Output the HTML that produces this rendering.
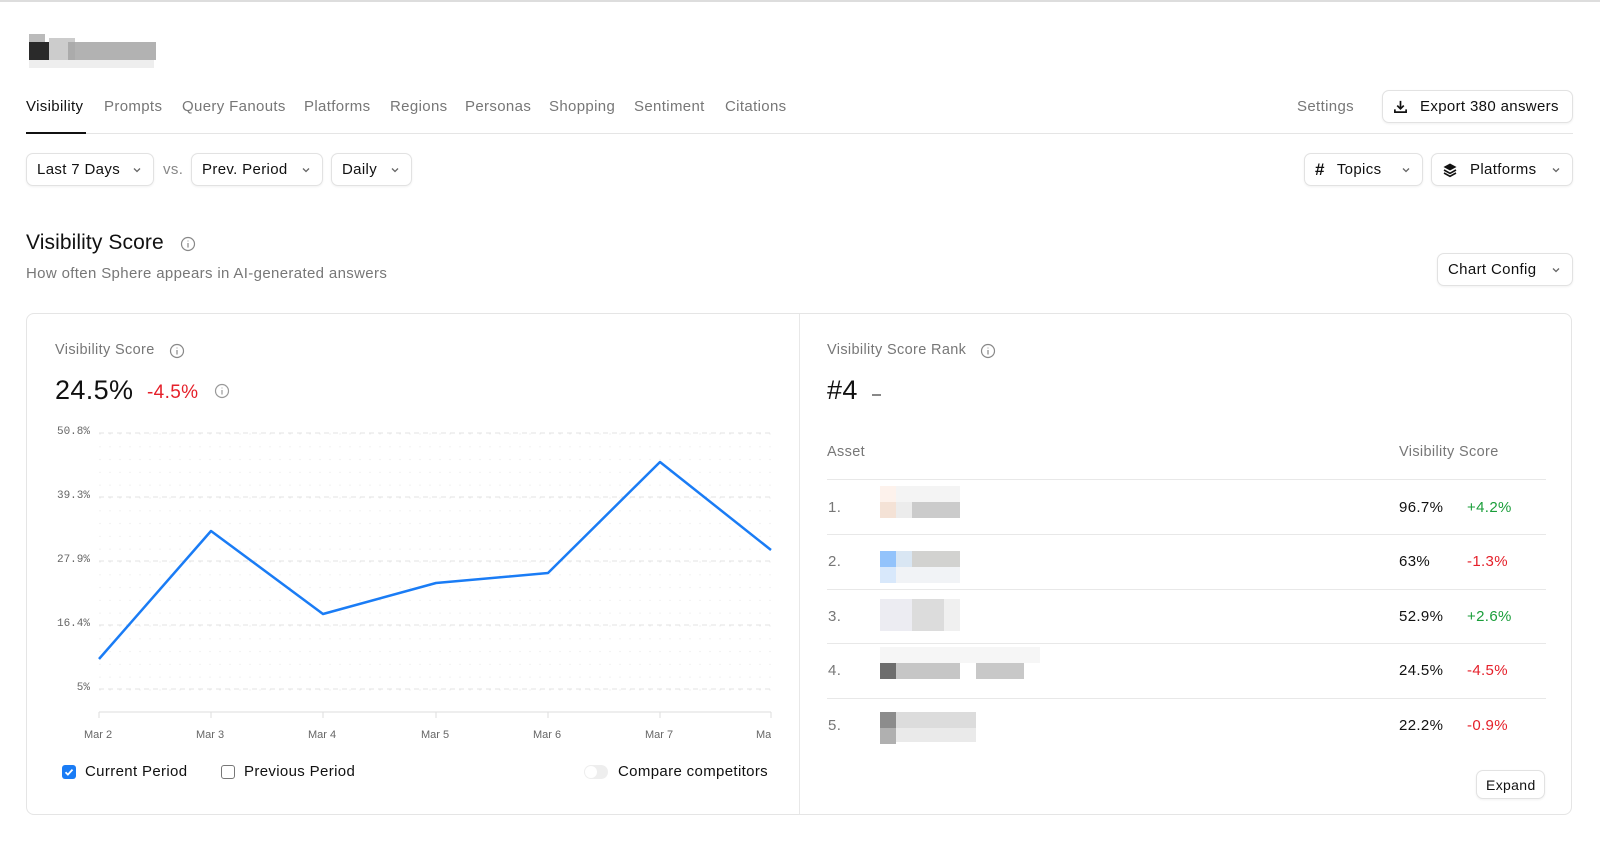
<!DOCTYPE html>
<html><head><meta charset="utf-8"><style>
*{box-sizing:border-box;margin:0;padding:0}
body{width:1600px;height:855px;background:#fff;font-family:"Liberation Sans",sans-serif;color:#111;position:relative;overflow:hidden;border-top:2px solid #ddd;letter-spacing:.35px}
.a{position:absolute;white-space:nowrap}
.tab{font-size:15px;color:#777;top:96px}
.btn{position:absolute;border:1px solid #e2e2e2;border-radius:7px;background:#fff;box-shadow:0 1px 2px rgba(0,0,0,.06);font-size:15px;color:#111;display:flex;align-items:center;padding:0 10px;gap:8px}
.chev{width:12px;height:12px;margin-left:auto}
.g{color:#1a9e3a}.r{color:#e5202a}
.px{position:absolute;width:16px;height:16px}
.yl{font-family:"Liberation Mono",monospace;font-size:11px;color:#666;text-align:right;width:60px;left:30px;letter-spacing:0}
.xl{font-size:11px;color:#666;top:727px;letter-spacing:0}
.row{position:absolute;left:827px;width:719px;height:1px;background:#e8e8e8}
.rn{font-size:15px;color:#777;left:828px}
.val{font-size:15px;left:1399px}
.dl{font-size:15px;left:1467px}
</style></head><body>
<div class="px" style="left:29px;top:32px;background:#bbb"></div><div class="px" style="left:29px;top:40px;width:20px;height:18px;background:#2a2a2a"></div>
<div class="a" style="left:49px;top:36px;width:26px;height:22px;background:#ccc"></div>
<div class="a" style="left:68px;top:40px;width:88px;height:18px;background:#a5a5a5;opacity:.85"></div>
<div class="a" style="left:29px;top:58px;width:125px;height:8px;background:#eee"></div>

<div class="a tab" style="left:26px;color:#111">Visibility</div>
<div class="a tab" style="left:104px">Prompts</div>
<div class="a tab" style="left:182px">Query Fanouts</div>
<div class="a tab" style="left:304px">Platforms</div>
<div class="a tab" style="left:390px">Regions</div>
<div class="a tab" style="left:465px">Personas</div>
<div class="a tab" style="left:549px">Shopping</div>
<div class="a tab" style="left:634px">Sentiment</div>
<div class="a tab" style="left:725px">Citations</div>
<div class="a tab" style="left:1297px">Settings</div>
<div class="a" style="left:26px;top:131px;width:1547px;height:1px;background:#e5e5e5"></div>
<div class="a" style="left:26px;top:130px;width:60px;height:2px;background:#111"></div>

<div class="btn" style="left:1382px;top:88px;width:191px;height:33px;gap:12px"><svg width="15" height="15" viewBox="0 0 16 16" fill="none" stroke="#111" stroke-width="1.8"><path d="M8 2v8M4.5 7L8 10.5 11.5 7M2 11v3h12v-3"/></svg>Export 380 answers</div>

<div class="btn" style="left:26px;top:151px;width:128px;height:33px">Last 7 Days<svg class="chev" viewBox="0 0 12 12" fill="none" stroke="#666" stroke-width="1.3"><path d="M3 4.5l3 3 3-3"/></svg></div>
<div class="a" style="left:163px;top:159px;font-size:15px;color:#888">vs.</div>
<div class="btn" style="left:191px;top:151px;width:132px;height:33px">Prev. Period<svg class="chev" viewBox="0 0 12 12" fill="none" stroke="#666" stroke-width="1.3"><path d="M3 4.5l3 3 3-3"/></svg></div>
<div class="btn" style="left:331px;top:151px;width:81px;height:33px">Daily<svg class="chev" viewBox="0 0 12 12" fill="none" stroke="#666" stroke-width="1.3"><path d="M3 4.5l3 3 3-3"/></svg></div>
<div class="btn" style="left:1304px;top:151px;width:119px;height:33px;gap:12px"><span style="font-weight:bold;font-size:17px">#</span>Topics<svg class="chev" viewBox="0 0 12 12" fill="none" stroke="#666" stroke-width="1.3"><path d="M3 4.5l3 3 3-3"/></svg></div>
<div class="btn" style="left:1431px;top:151px;width:142px;height:33px;gap:12px"><svg width="16" height="16" viewBox="0 0 16 16"><path d="M8 1.5L14.5 5 8 8.5 1.5 5z" fill="#111"/><path d="M2 8l6 3.3L14 8M2 11l6 3.3 6-3.3" fill="none" stroke="#111" stroke-width="1.6"/></svg>Platforms<svg class="chev" viewBox="0 0 12 12" fill="none" stroke="#666" stroke-width="1.3"><path d="M3 4.5l3 3 3-3"/></svg></div>

<div class="a" style="left:26px;top:229px;font-size:21px;font-weight:500;color:#111;letter-spacing:.1px">Visibility Score</div>
<svg class="a" style="left:180px;top:234px" width="16" height="16" viewBox="0 0 16 16" fill="none" stroke="#888" stroke-width="1.2"><circle cx="8" cy="8" r="6.5"/><path d="M8 7v4.5M8 4.6v.8"/></svg>
<div class="a" style="left:26px;top:263px;font-size:15px;color:#777">How often Sphere appears in AI-generated answers</div>
<div class="btn" style="left:1437px;top:251px;width:136px;height:33px">Chart Config<svg class="chev" viewBox="0 0 12 12" fill="none" stroke="#666" stroke-width="1.3"><path d="M3 4.5l3 3 3-3"/></svg></div>

<div class="a" style="left:26px;top:311px;width:1546px;height:502px;border:1px solid #e5e5e5;border-radius:8px"></div>
<div class="a" style="left:799px;top:312px;width:1px;height:500px;background:#e8e8e8"></div>

<div class="a" style="left:55px;top:340px;font-size:14.5px;color:#777">Visibility Score</div>
<svg class="a" style="left:169px;top:341px" width="16" height="16" viewBox="0 0 16 16" fill="none" stroke="#888" stroke-width="1.2"><circle cx="8" cy="8" r="6.5"/><path d="M8 7v4.5M8 4.6v.8"/></svg>
<div class="a" style="left:55px;top:373px;font-size:27px;color:#111">24.5%</div>
<div class="a r" style="left:147px;top:380px;font-size:19px">-4.5%</div>
<svg class="a" style="left:214px;top:381px" width="16" height="16" viewBox="0 0 16 16" fill="none" stroke="#999" stroke-width="1.2"><circle cx="8" cy="8" r="6.5"/><path d="M8 7v4.5M8 4.6v.8"/></svg>

<div class="a yl" style="top:424px">50.8%</div>
<div class="a yl" style="top:488px">39.3%</div>
<div class="a yl" style="top:552px">27.9%</div>
<div class="a yl" style="top:616px">16.4%</div>
<div class="a yl" style="top:680px">5%</div>
<svg class="a" style="left:0;top:0" width="800" height="760">
<defs><pattern id="d" x="99" y="431" width="10" height="12.8" patternUnits="userSpaceOnUse"><circle cx="1" cy="1" r=".6" fill="#e6e6e6"/></pattern></defs>
<rect x="99" y="431" width="672" height="260" fill="url(#d)"/>
<g stroke="#e3e3e3" stroke-dasharray="5 4"><path d="M99 431H771M99 495H771M99 559H771M99 623H771M99 687H771"/></g>
<path d="M99 710H771" stroke="#ddd"/>
<g stroke="#ddd"><path d="M99 710v6M211 710v6M323 710v6M436 710v6M548 710v6M660 710v6M771 710v6"/></g>
<polyline points="99,657 211,529 323,612 436,581 548,571 660,460 771,548" fill="none" stroke="#1a7cf5" stroke-width="2.5" stroke-linejoin="round"/>
</svg>
<div class="a xl" style="left:84px">Mar 2</div>
<div class="a xl" style="left:196px">Mar 3</div>
<div class="a xl" style="left:308px">Mar 4</div>
<div class="a xl" style="left:421px">Mar 5</div>
<div class="a xl" style="left:533px">Mar 6</div>
<div class="a xl" style="left:645px">Mar 7</div>
<div class="a xl" style="left:756px;width:15px;overflow:hidden">Mar</div>

<div class="a" style="left:62px;top:763px;width:14px;height:14px;border-radius:3px;background:#1a7cf5"></div>
<svg class="a" style="left:62px;top:763px" width="14" height="14" viewBox="0 0 14 14" fill="none" stroke="#fff" stroke-width="1.8"><path d="M3.5 7.2l2.4 2.4 4.6-5"/></svg>
<div class="a" style="left:85px;top:761px;font-size:15px">Current Period</div>
<div class="a" style="left:221px;top:763px;width:14px;height:14px;border-radius:3px;border:1.3px solid #777"></div>
<div class="a" style="left:244px;top:761px;font-size:15px">Previous Period</div>
<div class="a" style="left:584px;top:763px;width:24px;height:14px;border-radius:7px;background:#eee"></div>
<div class="a" style="left:585px;top:764px;width:12px;height:12px;border-radius:6px;background:#fff"></div>
<div class="a" style="left:618px;top:761px;font-size:15px">Compare competitors</div>

<div class="a" style="left:827px;top:340px;font-size:14.5px;color:#777">Visibility Score Rank</div>
<svg class="a" style="left:980px;top:341px" width="16" height="16" viewBox="0 0 16 16" fill="none" stroke="#888" stroke-width="1.2"><circle cx="8" cy="8" r="6.5"/><path d="M8 7v4.5M8 4.6v.8"/></svg>
<div class="a" style="left:827px;top:373px;font-size:27px">#4</div>
<div class="a" style="left:872px;top:392px;width:9px;height:1.5px;background:#888"></div>
<div class="a" style="left:827px;top:442px;font-size:14.5px;color:#777">Asset</div>
<div class="a" style="left:1399px;top:442px;font-size:14.5px;color:#777">Visibility Score</div>

<div class="row" style="top:477px"></div><div class="row" style="top:532px"></div><div class="row" style="top:587px"></div><div class="row" style="top:641px"></div><div class="row" style="top:696px"></div>

<div class="a rn" style="top:497px">1.</div><div class="a rn" style="top:551px">2.</div><div class="a rn" style="top:606px">3.</div><div class="a rn" style="top:660px">4.</div><div class="a rn" style="top:715px">5.</div>

<div class="px" style="left:880px;top:484px;background:#fdf2ec"></div><div class="px" style="left:880px;top:500px;background:#f4e2d6"></div>
<div class="a" style="left:896px;top:484px;width:64px;height:16px;background:#f4f4f4"></div><div class="a" style="left:912px;top:500px;width:48px;height:16px;background:#cbcbcb"></div><div class="px" style="left:896px;top:500px;background:#ececec"></div>

<div class="px" style="left:880px;top:549px;background:#93c3fb"></div><div class="px" style="left:896px;top:549px;background:#d9e6f3"></div><div class="a" style="left:912px;top:549px;width:48px;height:16px;background:#d2d2d0"></div>
<div class="px" style="left:880px;top:565px;background:#d8e8fb"></div><div class="a" style="left:896px;top:565px;width:64px;height:16px;background:#f1f3f6"></div>

<div class="a" style="left:880px;top:597px;width:32px;height:32px;background:#ececf2"></div><div class="a" style="left:912px;top:597px;width:32px;height:32px;background:#dcdcdc"></div><div class="a" style="left:944px;top:597px;width:16px;height:32px;background:#f0f0f0"></div>

<div class="a" style="left:880px;top:645px;width:160px;height:16px;background:#f6f6f6"></div>
<div class="px" style="left:880px;top:661px;background:#6d6d6d"></div><div class="a" style="left:896px;top:661px;width:64px;height:16px;background:#c6c6c6"></div><div class="a" style="left:976px;top:661px;width:48px;height:16px;background:#c8c8c8"></div>

<div class="px" style="left:880px;top:710px;background:#8c8c8c"></div><div class="a" style="left:896px;top:710px;width:80px;height:16px;background:#dcdcdc"></div>
<div class="px" style="left:880px;top:726px;background:#b0b0b0"></div><div class="a" style="left:896px;top:726px;width:80px;height:14px;background:#eaeaea"></div>

<div class="a val" style="top:497px">96.7%</div><div class="a dl g" style="top:497px">+4.2%</div>
<div class="a val" style="top:551px">63%</div><div class="a dl r" style="top:551px">-1.3%</div>
<div class="a val" style="top:606px">52.9%</div><div class="a dl g" style="top:606px">+2.6%</div>
<div class="a val" style="top:660px">24.5%</div><div class="a dl r" style="top:660px">-4.5%</div>
<div class="a val" style="top:715px">22.2%</div><div class="a dl r" style="top:715px">-0.9%</div>

<div class="btn" style="left:1476px;top:768px;width:69px;height:29px;font-size:14px;padding:0 9px">Expand</div>
</body></html>
